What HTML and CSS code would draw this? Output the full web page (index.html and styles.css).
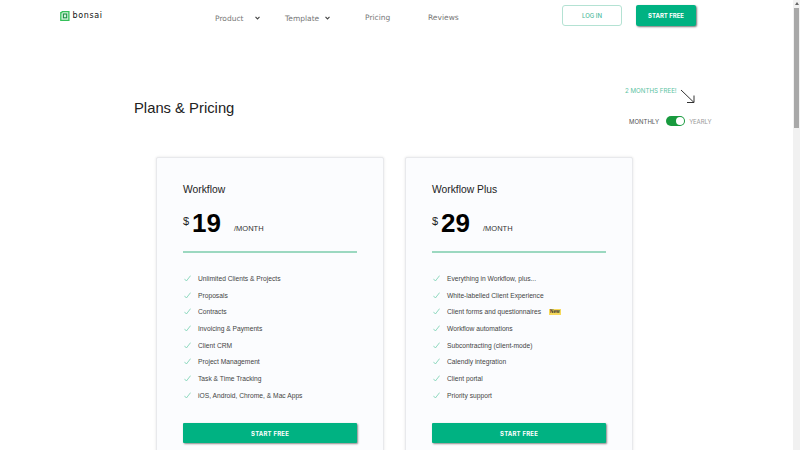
FILE: index.html
```html
<!DOCTYPE html>
<html lang="en">

<head>
  <meta charset="UTF-8">
  <title>Bonsai Pricing</title>
  <link rel="stylesheet" href="styles.css">
</head>

<body>
  <svg class="sprite" width="0" height="0">
    <symbol id="check" viewBox="0 0 7 7">
      <path d="M.4 3.8 2.4 6 6.6.6" fill="none" stroke="#75d0b0" stroke-width=".8" />
    </symbol>
  </svg>

  <div class="page">
    <header class="topbar">
      <a class="logo" href="#">
        <svg width="10" height="10" viewBox="0 0 10 10" fill="none">
          <path d="M2.2 1.6H.8V9.3H8.9V.7H2.2V1.6" fill="#d6f3dd" stroke="#35c05a" stroke-width="1.3" />
          <rect x="3.4" y="3" width="3.3" height="3.8" stroke="#1c8f45" stroke-width="1.1" />
        </svg>
        <span>bonsai</span>
      </a>
      <nav class="nav">
        <a class="nav-item item-product" href="#">Product
          <svg class="caret" width="5" height="4" viewBox="0 0 5 4" fill="none" stroke="#444" stroke-width="1.1"><path d="M.5.8 2.5 2.9 4.5.8" /></svg>
        </a>
        <a class="nav-item item-template" href="#">Template
          <svg class="caret" width="5" height="4" viewBox="0 0 5 4" fill="none" stroke="#444" stroke-width="1.1"><path d="M.5.8 2.5 2.9 4.5.8" /></svg>
        </a>
        <a class="nav-item item-pricing" href="#">Pricing</a>
        <a class="nav-item item-reviews" href="#">Reviews</a>
      </nav>
      <a class="btn-login" href="#">LOG IN</a>
      <a class="btn-start" href="#">START FREE</a>
    </header>

    <section class="intro">
      <h1>Plans &amp; Pricing</h1>
      <div class="billing">
        <div class="promo">
          <span>2 MONTHS FREE!</span>
          <svg width="15" height="15" viewBox="0 0 15 15" fill="none" stroke="#333" stroke-width="1">
            <path d="M1 1 14 13.5M14 6.5V13.5H7" />
          </svg>
        </div>
        <div class="switch-row">
          <span class="label-on">MONTHLY</span>
          <span class="switch"><span class="knob"></span></span>
          <span class="label-off">YEARLY</span>
        </div>
      </div>
    </section>

    <section class="plans">
      <article class="card">
        <h2>Workflow</h2>
        <div class="price"><span class="currency">$</span><span class="amount">19</span><span class="period">/MONTH</span></div>
        <ul class="features">
          <li><svg class="tick"><use href="#check" /></svg>Unlimited Clients &amp; Projects</li>
          <li><svg class="tick"><use href="#check" /></svg>Proposals</li>
          <li><svg class="tick"><use href="#check" /></svg>Contracts</li>
          <li><svg class="tick"><use href="#check" /></svg>Invoicing &amp; Payments</li>
          <li><svg class="tick"><use href="#check" /></svg>Client CRM</li>
          <li><svg class="tick"><use href="#check" /></svg>Project Management</li>
          <li><svg class="tick"><use href="#check" /></svg>Task &amp; Time Tracking</li>
          <li><svg class="tick"><use href="#check" /></svg>iOS, Android, Chrome, &amp; Mac Apps</li>
        </ul>
        <a class="btn-card" href="#">START FREE</a>
      </article>

      <article class="card">
        <h2>Workflow Plus</h2>
        <div class="price"><span class="currency">$</span><span class="amount">29</span><span class="period">/MONTH</span></div>
        <ul class="features">
          <li><svg class="tick"><use href="#check" /></svg>Everything in Workflow, plus...</li>
          <li><svg class="tick"><use href="#check" /></svg>White-labelled Client Experience</li>
          <li><svg class="tick"><use href="#check" /></svg>Client forms and questionnaires<span class="tag">New</span></li>
          <li><svg class="tick"><use href="#check" /></svg>Workflow automations</li>
          <li><svg class="tick"><use href="#check" /></svg>Subcontracting (client-mode)</li>
          <li><svg class="tick"><use href="#check" /></svg>Calendly integration</li>
          <li><svg class="tick"><use href="#check" /></svg>Client portal</li>
          <li><svg class="tick"><use href="#check" /></svg>Priority support</li>
        </ul>
        <a class="btn-card" href="#">START FREE</a>
      </article>
    </section>
  </div>

  <div class="scrollbar">
    <div class="scroll-arrow"></div>
    <div class="scroll-thumb"></div>
  </div>
</body>

</html>
```

FILE: styles.css
```css
* {
  box-sizing: border-box;
  margin: 0;
  padding: 0;
}

body {
  width: 800px;
  height: 450px;
  overflow: hidden;
  display: flex;
  background-color: #fff;
  color: #222;
  font-family: "Liberation Sans", sans-serif;
}

a {
  text-decoration: none;
}

.sprite {
  display: none;
}

.page {
  width: 793px;
  height: 450px;
  overflow: hidden;
}

/* top bar */
.topbar {
  height: 58px;
  display: flex;
  align-items: flex-start;
  padding-left: 60px;
}

.logo {
  display: flex;
  align-items: center;
  gap: 2.5px;
  margin-top: 10px;
  height: 11px;
  width: 155px;
  font-family: "DejaVu Sans", sans-serif;
  font-size: 8px;
  letter-spacing: 0.65px;
  color: #111;
}

.nav {
  display: flex;
}

.nav-item {
  display: flex;
  align-items: center;
  height: 12px;
  font-family: "DejaVu Sans", sans-serif;
  font-size: 7.5px;
  color: #777;
}

.item-product {
  margin-top: 12px;
  width: 70px;
}

.item-template {
  margin-top: 12px;
  width: 80px;
}

.item-pricing {
  margin-top: 11px;
  width: 63px;
}

.item-reviews {
  margin-top: 11px;
  width: 134px;
}

.caret {
  margin-left: 12px;
}

.item-template .caret {
  margin-left: 6px;
}

.btn-login,
.btn-start {
  width: 60px;
  height: 21px;
  margin-top: 5px;
  display: flex;
  align-items: center;
  justify-content: center;
  font-family: "Inter", sans-serif;
  font-size: 6px;
}

.btn-login {
  margin-right: 14px;
  border: 1px solid #b4e2d3;
  border-radius: 3px;
  font-weight: 500;
  color: #4dbb9c;
}

.btn-start {
  background-color: #00b282;
  border-radius: 2px;
  box-shadow: 1px 1px 2px #777;
  font-weight: 700;
  color: #fff;
}

/* heading and billing switch */
.intro {
  height: 99px;
  display: flex;
  padding-left: 134px;
}

h1 {
  width: 440px;
  margin-top: 40px;
  font-size: 14.8px;
  line-height: 20px;
  font-weight: 400;
  color: #222;
}

.billing {
  margin-left: 51px;
  padding-top: 26px;
  font-family: "Inter", sans-serif;
}

.promo {
  display: flex;
  align-items: flex-start;
  gap: 3px;
  height: 21px;
  font-size: 6.2px;
  line-height: 14px;
  color: #5cc3a3;
}

.promo svg {
  margin-top: 5px;
}

.switch-row {
  display: flex;
  align-items: center;
  height: 10px;
  margin-top: 11px;
  margin-left: 4px;
  font-size: 6px;
}

.label-on {
  color: #555;
}

.label-off {
  color: #999;
  letter-spacing: -0.1px;
}

.switch {
  width: 19px;
  height: 10px;
  margin: 0 4px 0 7px;
  display: flex;
  justify-content: flex-end;
  align-items: center;
  padding-right: 1px;
  border-radius: 5px;
  background-color: #189a3e;
}

.knob {
  width: 8px;
  height: 8px;
  border-radius: 50%;
  background-color: #fff;
}

/* plan cards */
.plans {
  display: flex;
  gap: 21px;
  padding-left: 156px;
}

.card {
  width: 228px;
  height: 320px;
  flex: none;
  padding: 26px 26px 0;
  background-color: #fbfcfe;
  border: 1px solid #e8e9ec;
  border-radius: 2px;
  box-shadow: 0 0 3px #e4e4e4;
}

h2 {
  font-size: 10.3px;
  line-height: 12px;
  font-weight: 400;
  color: #222;
}

.price {
  display: flex;
  height: 49px;
  margin-top: 8px;
  border-bottom: 2px solid #9bd8c0;
}

.currency {
  width: 9px;
  margin-top: 11px;
  font-size: 11px;
  line-height: 12px;
}

.amount {
  width: 42px;
  margin-top: 5px;
  font-size: 26px;
  line-height: 28px;
  font-weight: 700;
  color: #000;
}

.period {
  margin-top: 20px;
  font-size: 7.5px;
  line-height: 10px;
  color: #333;
}

.features {
  list-style: none;
  margin-top: 17px;
}

.features li {
  display: flex;
  align-items: center;
  height: 16.7px;
  font-size: 6.7px;
  color: #444;
}

.tick {
  width: 7px;
  height: 7px;
  margin: 0 7px 0 1px;
}

.tag {
  margin-left: 8px;
  padding: 0 1px;
  font-size: 4.7px;
  line-height: 6px;
  font-weight: 700;
  color: #333;
  background-color: #f7d95c;
}

.btn-card {
  height: 20px;
  margin-top: 19.5px;
  display: flex;
  align-items: center;
  justify-content: center;
  background-color: #00b282;
  border-radius: 1px;
  box-shadow: 1px 1px 2px #888;
  font-family: "Inter", sans-serif;
  font-size: 6px;
  font-weight: 700;
  letter-spacing: 0.2px;
  color: #fff;
}

/* scrollbar on the right */
.scrollbar {
  width: 7px;
  height: 450px;
  flex: none;
  padding-left: 1px;
  background-color: #f1f1f1;
}

.scroll-arrow {
  width: 0;
  height: 0;
  margin: 2px 0 3px 1px;
  border-left: 2px solid transparent;
  border-right: 2px solid transparent;
  border-bottom: 3px solid #666;
}

.scroll-thumb {
  width: 5px;
  height: 120px;
  background-color: #a8a8a8;
}
```
